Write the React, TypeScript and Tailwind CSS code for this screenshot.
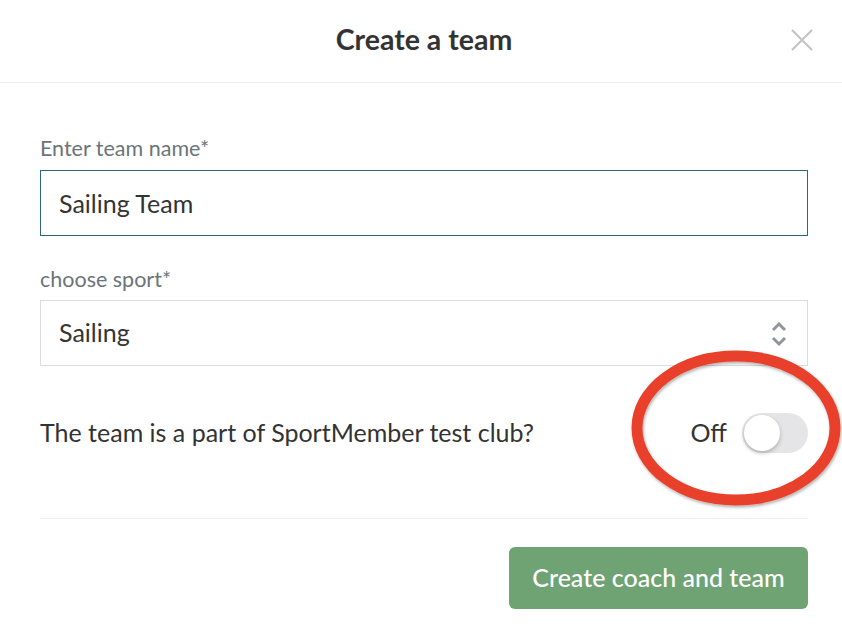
import React, { useState } from 'react';

const App: React.FC = () => {
  const [name, setName] = useState('Sailing Team');
  const [on, setOn] = useState(false);

  return (
    <div className="relative w-[842px] h-[636px] bg-white overflow-hidden text-[#333] font-['Lato',sans-serif]">
      <div className="relative h-[83px] flex items-center justify-center border-b border-[#eeeeee]">
        <h2 className="text-[28.5px] font-bold pb-[4px] pl-[6px]">Create a team</h2>
        <button type="button" className="absolute right-[29px] top-[29px] text-[#c4c4c4]" title="Close">
          <svg width="22" height="22" viewBox="0 0 22 22" fill="none" stroke="currentColor" strokeWidth="2.2">
            <path d="M1 1 L21 21 M21 1 L1 21" />
          </svg>
        </button>
      </div>

      <div className="pl-[40px] pr-[34px] pt-[52px]">
        <label className="block text-[21.5px] leading-[26px] text-[#6b7478] mb-[9px]">Enter team name*</label>
        <input
          value={name}
          onChange={e => setName(e.target.value)}
          className="w-full h-[66px] border border-[#2e6877] px-[18px] text-[25px] text-[#333] outline-none"
        />

        <label className="block text-[21.5px] leading-[26px] text-[#6b7478] mt-[30px] mb-[8px]">choose sport*</label>
        <div className="relative w-full h-[66px] border border-[#dddddd] flex items-center px-[18px] text-[25px]">
          <span>Sailing</span>
          <svg className="absolute right-[19px] top-[20px]" width="18" height="26" viewBox="0 0 18 26" fill="none" stroke="#8f979b" strokeWidth="3">
            <path d="M3 9 L9 3 L15 9" />
            <path d="M3 17 L9 23 L15 17" />
          </svg>
        </div>

        <div className="flex items-center justify-between h-[46px] mt-[44px]">
          <span className="text-[25px]">The team is a part of SportMember test club?</span>
          <div className="flex items-center gap-[15px]">
            <span className="text-[25px]">{on ? 'On' : 'Off'}</span>
            <button
              type="button"
              onClick={() => setOn(!on)}
              className={`relative w-[66px] h-[40px] rounded-full ${on ? 'bg-[#6fa373]' : 'bg-[#e5e5e7]'}`}
            >
              <span className={`absolute top-[2px] ${on ? 'left-[28px]' : 'left-[2px]'} w-[36px] h-[36px] rounded-full bg-white shadow-[0_2px_4px_rgba(0,0,0,0.25)]`} />
            </button>
          </div>
        </div>

        <div className="border-t border-[#eeeeee] mt-[62px]" />

        <div className="flex justify-end mt-[28px]">
          <button type="button" className="h-[62px] w-[299px] rounded-[6px] bg-[#6fa373] text-white text-[25px] font-medium">
            Create coach and team
          </button>
        </div>
      </div>

      <svg className="absolute left-0 top-0 pointer-events-none" width="842" height="636">
        <defs>
          <filter id="sh" x="-20%" y="-20%" width="140%" height="140%">
            <feDropShadow dx="1" dy="2" stdDeviation="1.5" floodColor="#000" floodOpacity="0.3" />
          </filter>
        </defs>
        <ellipse cx="736" cy="428" rx="99" ry="72" fill="none" stroke="#e8412a" strokeWidth="11" filter="url(#sh)" />
      </svg>
    </div>
  );
};

export default App;
